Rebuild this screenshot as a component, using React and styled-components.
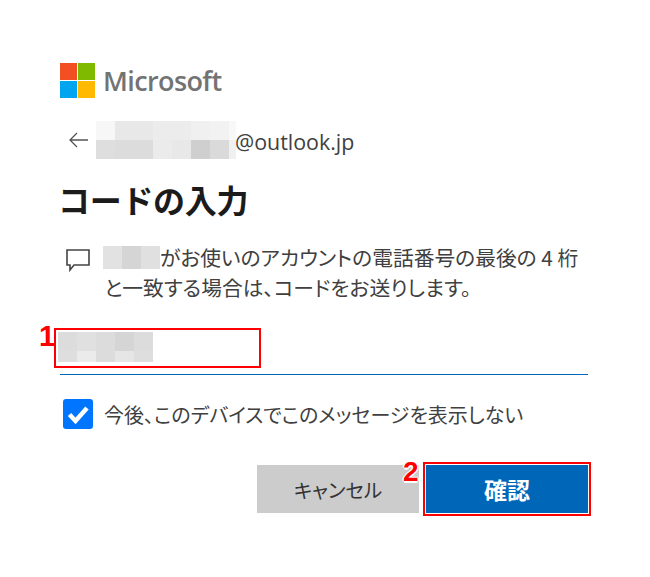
import React from 'react'
import styled, { createGlobalStyle } from 'styled-components'

const EMAIL_CELLS = [
	'#f7f7f7', '#e8e8e8', '#e8e8e8', '#ececec', '#ececec', '#f0f0f0', '#f2f2f2', '#f8f8f8',
	'#dedede', '#dcdcdc', '#dcdcdc', '#ebebeb', '#e8e8e8', '#cfcfcf', '#dadada', '#f0f0f0',
]
const NAME_CELLS = ['#e2e2e2', '#d5d5d5', '#e0e0e0']
const CODE_CELLS = [
	'#dcdcdc', '#e0e0e0', '#dcdcdc', '#d5d5d5', '#dcdcdc',
	'#dedede', '#ebebeb', '#dcdcdc', '#e6e6e6', '#dedede',
]

const Mosaic = ({ cells, cols, rows, width, height }) => (
	<MosaicGrid $cols={cols} $rows={rows} $width={width} $height={height}>
		{cells.map((color, i) => (
			<MosaicCell key={i} $color={color} />
		))}
	</MosaicGrid>
)

const App = () => {
	return (
		<Page>
			<GlobalStyle />
			<Brand>
				<LogoGrid>
					<LogoSquare $color='#f25022' />
					<LogoSquare $color='#7fba00' />
					<LogoSquare $color='#00a4ef' />
					<LogoSquare $color='#ffb900' />
				</LogoGrid>
				<BrandName>Microsoft</BrandName>
			</Brand>

			<Identity>
				<BackIcon viewBox='0 0 20 16'>
					<path d='M1 8h18M8 1 1 8l7 7' fill='none' stroke='#555' strokeWidth='1.3' />
				</BackIcon>
				<Mosaic cells={EMAIL_CELLS} cols='repeat(7, 19px) 7px' rows='19px 19px' width='140px' height='38px' />
				<Email>@outlook.jp</Email>
			</Identity>

			<Title>コードの入力</Title>

			<Message>
				<ChatIcon viewBox='0 0 24 23'>
					<path d='M1 1h22v15H8l-4 5v-5H1z' fill='none' stroke='#444' strokeWidth='1.6' />
				</ChatIcon>
				<MessageText>
					<FirstLine>
						<Mosaic cells={NAME_CELLS} cols='repeat(3, 19px)' rows='23px' width='57px' height='23px' />
						がお使いのアカウントの電話番号の最後の 4 桁
					</FirstLine>
					<SecondLine>と一致する場合は、コードをお送りします。</SecondLine>
				</MessageText>
			</Message>

			<CodeField>
				<CodeBlur>
					<Mosaic cells={CODE_CELLS} cols='repeat(5, 19px)' rows='19px 11px' width='95px' height='30px' />
				</CodeBlur>
				<CodeMark />
				<CodeNumber>1</CodeNumber>
			</CodeField>

			<CheckRow>
				<CheckBox>
					<svg viewBox='0 0 30 30' width='30' height='30'>
						<path d='M6.5 15.5 12.5 22 24 9' fill='none' stroke='#fff' strokeWidth='4.5' />
					</svg>
				</CheckBox>
				<CheckLabel>今後、このデバイスでこのメッセージを表示しない</CheckLabel>
			</CheckRow>

			<Actions>
				<CancelButton>キャンセル</CancelButton>
				<ConfirmWrap>
					<ConfirmButton>確認</ConfirmButton>
					<ConfirmNumber>2</ConfirmNumber>
				</ConfirmWrap>
			</Actions>
		</Page>
	)
}

export default App

const GlobalStyle = createGlobalStyle`
	html, body {
		margin: 0;
		background: #fff;
	}
	body {
		font-family: 'Noto Sans CJK JP', 'Noto Sans', sans-serif;
		color: #404040;
	}
`
const Page = styled.div`
	width: 650px;
	height: 577px;
	box-sizing: border-box;
	padding: 63px 62px 0 60px;
	overflow: hidden;
`
const Brand = styled.div`
	display: flex;
	align-items: center;
	gap: 8px;
	height: 35px;
`
const LogoGrid = styled.div`
	display: grid;
	grid-template-columns: 17px 17px;
	grid-template-rows: 17px 17px;
	gap: 1px;
`
const LogoSquare = styled.div`
	background: ${(p) => p.$color};
`
const BrandName = styled.div`
	font-family: 'Open Sans', sans-serif;
	font-size: 27px;
	font-weight: 600;
	letter-spacing: -0.6px;
	color: #737373;
`
const Identity = styled.div`
	display: flex;
	align-items: center;
	height: 38px;
	margin-top: 23px;
	padding-left: 9px;
`
const BackIcon = styled.svg`
	width: 20px;
	height: 16px;
	margin-right: 7px;
`
const MosaicGrid = styled.span`
	display: inline-grid;
	flex: none;
	grid-template-columns: ${(p) => p.$cols};
	grid-template-rows: ${(p) => p.$rows};
	width: ${(p) => p.$width};
	height: ${(p) => p.$height};
`
const MosaicCell = styled.span`
	background: ${(p) => p.$color};
`
const Email = styled.div`
	font-family: 'Open Sans', sans-serif;
	font-size: 21.4px;
	color: #404040;
	margin-left: -1px;
	margin-top: 2px;
`
const Title = styled.h1`
	margin: 20px 0 0 -2px;
	font-size: 32px;
	line-height: 40px;
	font-weight: 700;
	letter-spacing: -0.3px;
	color: #1b1b1b;
`
const Message = styled.div`
	display: flex;
	margin-top: 26px;
	padding-left: 6px;
`
const ChatIcon = styled.svg`
	flex: none;
	width: 24px;
	height: 23px;
	margin: 4px 13px 0 0;
`
const MessageText = styled.div`
	font-size: 20.75px;
	line-height: 31px;
	white-space: nowrap;
	font-feature-settings: 'palt';
`
const FirstLine = styled.div`
	display: flex;
	align-items: center;
	white-space: pre;
	height: 24px;
`
const SecondLine = styled.div`
	margin-top: 3px;
	padding-left: 1px;
`
const CodeField = styled.div`
	position: relative;
	height: 45px;
	margin-top: 26px;
	border-bottom: 1px solid #0067b8;
`
const CodeBlur = styled.div`
	display: flex;
	padding-top: 3px;
	margin-left: -2px;
`
const CodeMark = styled.div`
	position: absolute;
	left: -6px;
	top: -1px;
	width: 207px;
	height: 40px;
	box-sizing: border-box;
	border: 2px solid #f00;
`
const CodeNumber = styled.div`
	position: absolute;
	left: -21px;
	top: -8px;
	font-family: 'Liberation Sans', sans-serif;
	font-weight: 700;
	font-size: 29px;
	line-height: 30px;
	color: #f00;
`
const CheckRow = styled.label`
	display: flex;
	align-items: center;
	gap: 11px;
	margin-top: 24px;
	padding-left: 3px;
`
const CheckBox = styled.span`
	flex: none;
	width: 30px;
	height: 30px;
	border-radius: 3px;
	background: #0075ff;
`
const CheckLabel = styled.span`
	font-size: 20px;
	font-feature-settings: 'palt';
`
const Actions = styled.div`
	display: flex;
	justify-content: flex-end;
	align-items: flex-start;
	gap: 4px;
	margin: 36px -3px 0 0;
`
const CancelButton = styled.button`
	width: 162px;
	height: 48px;
	border: none;
	background: #ccc;
	font-family: inherit;
	font-size: 19.5px;
	font-feature-settings: 'palt';
	color: #333;
`
const ConfirmWrap = styled.div`
	position: relative;
	padding: 1px;
	margin-top: -3px;
	border: 2px solid #f00;
`
const ConfirmButton = styled.button`
	display: block;
	width: 162px;
	height: 48px;
	border: none;
	background: #0067b8;
	font-family: inherit;
	font-size: 23px;
	font-weight: 700;
	color: #fff;
`
const ConfirmNumber = styled.div`
	position: absolute;
	left: -22px;
	top: -7px;
	font-family: 'Liberation Sans', sans-serif;
	font-weight: 700;
	font-size: 28px;
	line-height: 30px;
	color: #f00;
	text-shadow: -1.5px 0 #fff, 1.5px 0 #fff, 0 -1.5px #fff, 0 1.5px #fff;
`
